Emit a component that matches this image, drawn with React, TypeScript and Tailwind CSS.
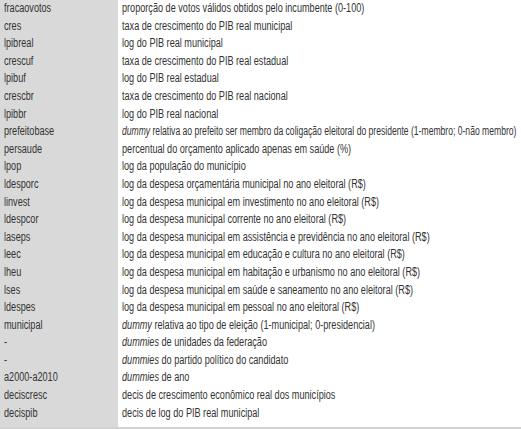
const ROWS: [string, React.ReactNode][] = [
  ["fracaovotos", "proporção de votos válidos obtidos pelo incumbente (0-100)"],
  ["cres", "taxa de crescimento do PIB real municipal"],
  ["lpibreal", "log do PIB real municipal"],
  ["crescuf", "taxa de crescimento do PIB real estadual"],
  ["lpibuf", "log do PIB real estadual"],
  ["crescbr", "taxa de crescimento do PIB real nacional"],
  ["lpibbr", "log do PIB real nacional"],
  [
    "prefeitobase",
    <>
      <i>dummy</i> relativa ao prefeito ser membro da coligação eleitoral do presidente (1-membro; 0-não membro)
    </>,
  ],
  ["persaude", "percentual do orçamento aplicado apenas em saúde (%)"],
  ["lpop", "log da população do município"],
  ["ldesporc", "log da despesa orçamentária municipal no ano eleitoral (R$)"],
  ["linvest", "log da despesa municipal em investimento no ano eleitoral (R$)"],
  ["ldespcor", "log da despesa municipal corrente no ano eleitoral (R$)"],
  ["laseps", "log da despesa municipal em assistência e previdência no ano eleitoral (R$)"],
  ["leec", "log da despesa municipal em educação e cultura no ano eleitoral (R$)"],
  ["lheu", "log da despesa municipal em habitação e urbanismo no ano eleitoral (R$)"],
  ["lses", "log da despesa municipal em saúde e saneamento no ano eleitoral (R$)"],
  ["ldespes", "log da despesa municipal em pessoal no ano eleitoral (R$)"],
  [
    "municipal",
    <>
      <i>dummy</i> relativa ao tipo de eleição (1-municipal; 0-presidencial)
    </>,
  ],
  [
    "-",
    <>
      <i>dummies</i> de unidades da federação
    </>,
  ],
  [
    "-",
    <>
      <i>dummies</i> do partido político do candidato
    </>,
  ],
  [
    "a2000-a2010",
    <>
      <i>dummies</i> de ano
    </>,
  ],
  ["deciscresc", "decis de crescimento econômico real dos municípios"],
  ["decispib", "decis de log do PIB real municipal"],
];

// condensed look: Liberation Sans squeezed horizontally
function Narrow({ children, tight }: { children: React.ReactNode; tight?: boolean }) {
  return (
    <span
      className={
        tight
          ? "inline-block origin-left scale-x-[0.715] whitespace-nowrap"
          : "inline-block origin-left scale-x-[0.76] whitespace-nowrap"
      }
    >
      {children}
    </span>
  );
}

export default function App() {
  return (
    <div className="w-[521px] h-[429px] overflow-hidden bg-white font-['Liberation_Sans',Arial,sans-serif] text-[12px] text-[#333333]">
      <div className="flex flex-col border-b-2 border-[#d2d2d2]">
        {ROWS.map(([name, desc], i) => (
          <div key={i} className="flex h-[17.6px] leading-[17.6px]">
            <div className="w-[118px] shrink-0 bg-[#d9d9d9] pl-[4px]">
              <Narrow>{name}</Narrow>
            </div>
            <div className="pl-[4px]">
              <Narrow tight={name === "prefeitobase"}>{desc}</Narrow>
            </div>
          </div>
        ))}
        <div className="flex h-[4.6px]">
          <div className="w-[118px] bg-[#d9d9d9]" />
        </div>
      </div>
      <div className="h-[2px] w-[118px] bg-[#d9d9d9]" />
    </div>
  );
}
